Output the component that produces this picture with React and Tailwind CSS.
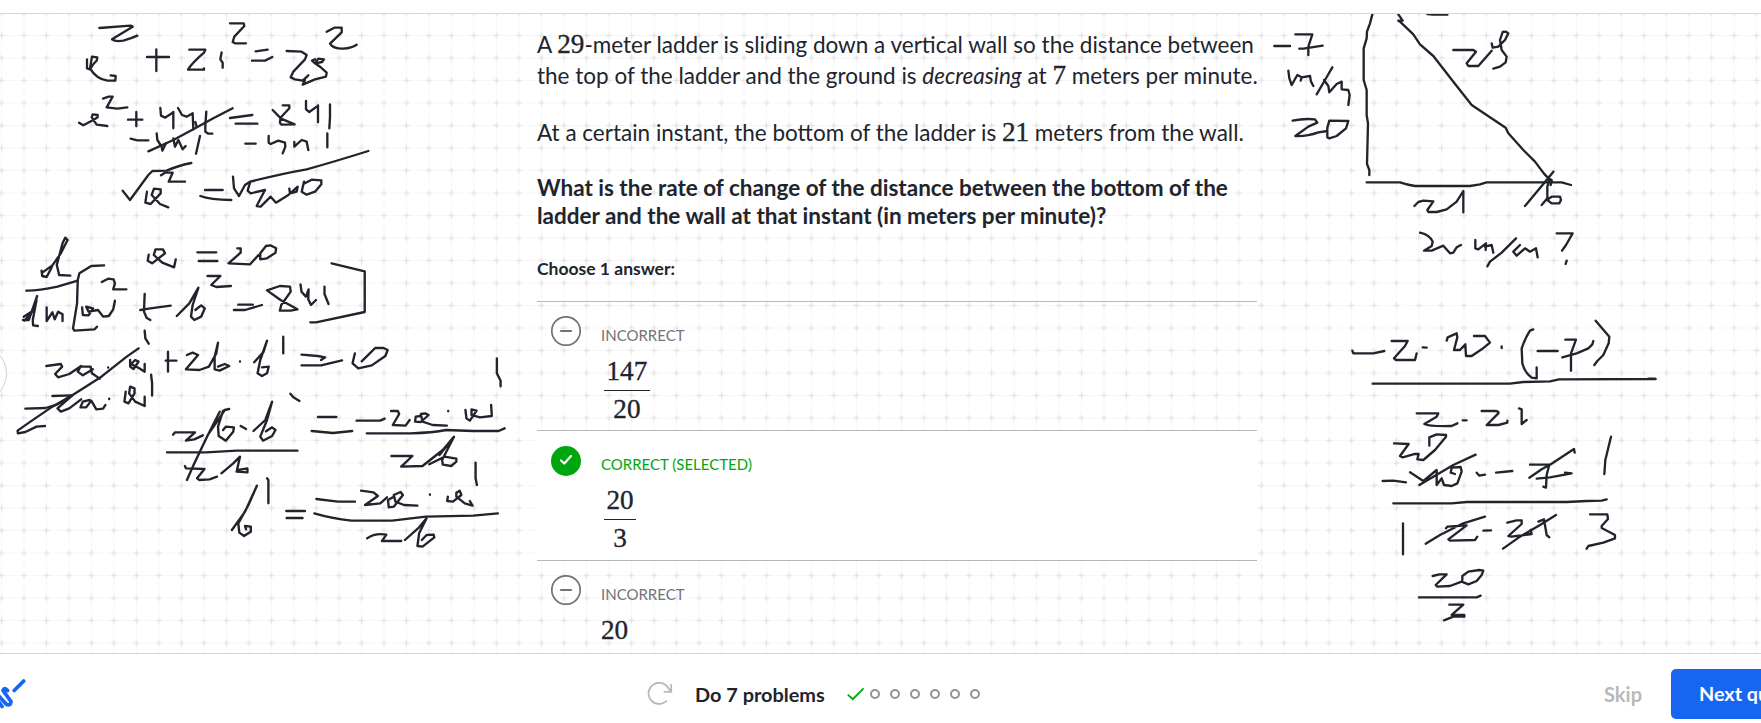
import React from "react";

const NOTES_TOP_LEFT = [
  "M298 84L392 77L398 80L336 118Q345 126 370 122Q395 115 412 107",
  "M261 178V205L270 208Q280 190 290 182L292 172L276 170L270 205Q288 236 322 242L346 242L347 228L332 226",
  "M441 171H507M469 148V213",
  "M568 149H616L612 158Q575 190 564 209H612V205",
  "M665 157L661 178L668 188V203",
  "M690 70H731L733 78L703 110L698 126L705 130H738",
  "M767 154L803 149M756 182H795L817 171",
  "M860 153L905 155L920 165L915 178L880 215L872 232L885 238L908 242L925 226M915 240L908 254L945 238L978 230L980 218L958 198M945 178L936 182L945 190L966 186L972 178L955 176L945 190L960 200",
  "M980 95L1003 83L1025 83V97L990 131Q1000 147 1030 146Q1055 144 1070 134",
  "M309 296L326 290H338L320 322L352 326L382 322",
  "M237 368L250 376L280 360L293 352V345L278 343L275 352L290 374L322 378",
  "M384 359H427M409 336V378",
  "M481 324L483 347L495 353L518 338M520 336V385M534 324L546 345L560 350L578 340L580 388M590 380L586 366M619 335L616 375V395L625 401H637",
  "M445 454L520 420L580 388L640 355L698 325",
  "M392 416L412 421H445",
  "M470 400L472 420L485 440L487 452L498 430M520 415L525 440L535 420L548 448L557 438M600 408L588 461",
  "M690 354L757 345M707 371H772",
  "M818 330L843 356L884 373L845 374Q836 370 843 352L868 325V316H848",
  "M918 303V328L928 336L950 320M954 316V367M990 313V350L988 385M736 431H767",
  "M806 408V428L812 432L835 422L855 428L856 440L848 460M883 426V440L905 420L920 425L925 450M982 400V442",
  "M368 572L390 600L445 525L457 513L500 512Q530 498 574 489",
  "M483 526L495 518H518L506 545H555",
  "M441 575L436 608L452 612L482 580V568L462 566L455 585L480 612L505 622",
  "M615 570H668M601 588Q630 599 694 600",
  "M699 530L702 565L717 588L735 555L750 545Q850 520 920 508Q1000 486 1105 453",
  "M750 548L743 572L752 580L795 570L770 618L782 620L812 590L828 608L865 585L893 560L890 575L870 580L868 566M912 545L905 575L920 584L945 575L964 553V541L935 539L910 552",
];

const NOTES_MIDDLE_LEFT = [
  "M123 152L125 168L138 171L150 148L155 136L125 158M155 136L180 100L200 60L193 53L185 70L168 135L175 165L208 167",
  "M78 212Q110 213 170 200L230 182",
  "M68 300H85L110 228M70 290L92 276M72 302L98 272M108 240L97 300L98 316L112 318M138 262V303L155 277L162 298L172 275L185 283V303",
  "M308 136L270 138L235 160L230 180L228 250L216 325L220 332L280 328L287 320",
  "M301 186L320 176L336 178L340 190L335 208H374",
  "M243 262L245 285L262 286L275 265L255 260L262 275L290 270L305 290L322 288L335 268L340 242",
  "M415 270L440 266L505 257M428 222L426 275L434 294L445 300",
  "M523 288L560 250L587 203L570 255L565 290L575 300L595 290L606 265L595 256L578 270M560 250L586 206",
  "M614 168L652 168L625 195L640 201L683 198",
  "M705 254H748M692 270H725L775 255",
  "M790 211L830 240L880 268L860 272L828 272L832 255L860 215L858 200L828 198L790 211",
  "M889 193L892 215L905 230L913 208L912 238L920 255L935 240M960 200V222L972 252",
  "M981 130L1079 154V276L935 307H918",
  "M440 104L437 122L450 130L488 100L482 88L460 88L455 105L480 128L515 142L520 118",
  "M584 97H640M588 123H643M702 85L712 85V98L676 130L740 133L765 105M787 78L770 100V118L790 115L815 98L817 85L800 76L787 78",
  "M428 332L430 355L440 371",
  "M137 438L180 432L184 440L163 462L172 472L205 462L240 438M265 440L238 440L230 455L245 466L275 448M268 440L272 460L295 476M320 442V443",
  "M410 385L375 410L300 470L215 525L155 560L90 605L52 632L53 640L75 636L108 620L133 618",
  "M385 420V440L395 447L410 425L400 420L388 432L412 445L428 455V432",
  "M490 422H522M497 395V455M553 405L570 398L586 405L550 448L590 450L618 440L640 400L645 368L635 410V448L650 452L678 438L665 432L645 440M710 424V425",
  "M752 427L780 395L790 362L770 420L762 460L775 468L790 460L795 440L775 442M838 350V400",
  "M892 404L940 408L962 412L950 420M892 436H950L1012 421",
  "M1050 400L1043 430L1060 445L1100 436L1140 408L1147 390L1135 384L1110 384L1070 424M1470 415V460L1481 482V499",
  "M155 528L213 526M75 566L135 564L170 553L213 528M210 530L170 565L180 575L205 565L240 538M265 540L245 545L238 562L255 562L270 542L285 568L305 566L312 555M323 536V537",
  "M372 515L368 545L380 550L398 520V505L385 500L382 520L400 545L428 558V530M447 464L450 490V527",
  "M859 521L868 532L886 543",
];

const NOTES_BOTTOM_LEFT = [
  "M512 104L518 97H577L550 122L575 118L600 106",
  "M553 240L575 190L615 105L650 35M618 100L640 68L665 30L678 27M660 32L645 80L647 108L668 122L690 95L692 82L668 80L660 90M712 78L728 87",
  "M750 93L785 60L805 5L790 60L770 110L778 122L805 108L815 90L805 82L787 94",
  "M941 51H995M922 93L985 99L1042 93M494 157H610L700 152H880",
  "M547 198L550 205L605 207L583 235L590 240L620 238L642 230M655 220L690 190L710 170L700 215L732 217V205L705 210",
  "M1055 62H1125L1138 56M1157 33H1177L1181 42L1162 75L1200 77L1212 60M1245 48L1230 50L1228 65L1245 66L1268 45L1258 40L1245 42L1250 65L1280 75L1322 77M1326 33V34",
  "M1377 30L1380 55L1390 62L1410 32L1395 28L1395 45L1420 52L1455 48L1453 15",
  "M1085 100H1215Q1280 98 1320 90L1400 93H1475L1493 85",
  "M1158 168H1220L1187 200L1250 198L1310 150L1343 110L1308 180L1310 194L1335 198L1350 185V176L1315 170L1270 193M1343 112L1300 165M1407 188V235L1411 255",
  "M686 390L725 335L760 257L735 315L705 370L708 398L722 408L742 395V380L725 378L728 388M790 235L794 240V310",
  "M847 333H902M848 354H895M936 297L1000 305H1050",
  "M1068 272L1105 277L1118 288L1080 315L1125 310L1145 292M1165 290L1148 300L1150 322L1165 320L1192 285L1185 276L1165 285L1170 305L1195 315L1235 317M1272 283V284M1325 290L1323 303L1340 305L1365 285L1360 272L1350 278V290L1375 310L1398 317L1390 303",
  "M930 340Q980 355 1040 362H1160L1260 350L1400 347L1473 340",
  "M1086 415Q1110 398 1143 404L1130 423H1187M1198 420L1240 382L1262 355L1240 400L1235 438L1250 440L1285 412L1283 404L1262 405L1248 420",
];

const NOTES_TRIANGLE = [
  "M397 43L390 70L381 95L380 115L371 145V240L380 270V345L384 370L381 492L388 510V525",
  "M475 43L488 62L475 62L480 65L520 103L540 133L580 168L640 245L695 315L797 383L805 400L850 450L885 485L912 521L935 545",
  "M562 42L580 44H622M103 138H150M166 103H217L205 140V165M178 146H190L248 137",
  "M640 150H700L708 155L680 190L685 198H715L755 152M755 130L758 143L775 140L795 120L805 100L798 95L788 96L780 120L785 150L800 170L797 187L780 200L760 206",
  "M145 212L148 235L155 255L172 225L185 232L182 242M185 232L210 228L213 245L220 258M277 202L255 240L230 283M252 240L265 258L268 277L290 252L305 245V268L325 270L329 285L325 315",
  "M158 362Q190 355 225 358L232 368L205 380L166 408Q200 410 235 397L262 393M262 383L268 362L325 363L318 385L290 408L268 415L262 412V383",
  "M380 547H480Q500 554 525 558H690L720 553L740 547H965L993 555",
  "M523 618L535 606L550 602L580 604L562 630L565 636H590L620 628L650 605L670 573V637",
  "M940 515L920 540L855 618M925 535L935 540L932 555M928 540L922 560V595L905 615M920 600L935 590H960L963 600L958 610H935L922 600",
  "M540 698Q570 705 578 725L575 738L552 752L575 752L610 737L630 760L640 758L650 742L663 735M706 720V745L715 748L738 730L737 750M735 740L755 735L760 758M828 715L785 758L750 785L742 799M840 735L820 755L830 767L855 745L870 755L888 745L893 772M950 700H998L978 735L966 752M980 782L977 792",
];

const NOTES_RIGHT = [
  "M97 152L100 160H160L193 153M215 123H263L255 138L222 175L228 180H285L290 160M308 142L320 143",
  "M380 122L383 112L410 100L412 112L402 150L420 150L436 133L438 168L455 168L485 148L510 128L495 108L462 108M545 139V144",
  "M640 88L630 92Q615 115 605 145L607 190Q615 220 635 233L650 235V202M653 153H713M736 119H768L753 160V212M727 172L770 160L805 145L817 133L820 123M827 62L868 110L866 130L850 165L832 183L823 195",
  "M158 251H570L610 246L690 244L717 238L1007 237M985 236H1005",
  "M290 340H355L350 350L313 372Q330 380 395 378L412 370M428 361H440M485 333H525Q538 333 535 340L500 375L535 375L562 368V362M597 325L605 328V372L620 360",
  "M222 430L266 432L240 468L248 472L285 462L296 462L292 478L310 480L345 450L378 410V405L350 403L328 412V437",
  "M188 543L220 542L258 547M298 555L340 530L400 495L467 464M270 517L310 543L350 510V555L365 535L372 555L395 558L412 550L425 515L422 501L395 503L392 518L405 522M470 518L478 527L495 524M528 518L577 513",
  "M630 494H688L680 525L678 563L670 560M650 536L690 532L755 520L735 518M628 533L665 508L690 494L762 447L764 458M873 410L856 480L853 522",
  "M220 610H395L440 606H740L800 603L845 602L860 598",
  "M249 670V763M317 731L360 705L430 670L495 650M378 685L382 680L440 676L385 718L390 722L465 720L472 710M490 692L513 691M562 668L590 661H605V672L565 708L575 710L635 702L632 690M549 746L600 710L660 675L708 645M655 665L672 658L680 705L688 712M810 643H862L864 657L845 678V684L885 705V715L850 728L805 738L800 746",
  "M338 828L358 823H380L347 855L352 860L390 858L425 845L445 853L470 843L485 825L490 812L478 810L445 815L427 828V840",
  "M297 892H470L482 887M388 914H430L395 945H433V950H400L372 961",
];

function Ink({ origin, strokes, scale }) {
  return (
    <g transform={`translate(${origin[0]} ${origin[1]}) scale(${scale})`}>
      {strokes.map((d, i) => (
        <path key={i} d={d} />
      ))}
    </g>
  );
}

function Scratchpad() {
  return (
    <svg
      className="pointer-events-none absolute inset-0"
      width="1761"
      height="640"
      viewBox="0 14 1761 640"
    >
      <g
        fill="none"
        stroke="#21242c"
        strokeWidth="7"
        strokeLinecap="round"
        strokeLinejoin="round"
      >
        <Ink origin={[0, 0]} scale="0.33333" strokes={NOTES_TOP_LEFT} />
        <Ink origin={[0, 220]} scale="0.33801 0.33333" strokes={NOTES_MIDDLE_LEFT} />
        <Ink origin={[0, 400]} scale="0.33801 0.33333" strokes={NOTES_BOTTOM_LEFT} />
        <Ink origin={[1240, 0]} scale="0.33333" strokes={NOTES_TRIANGLE} />
        <Ink origin={[1320, 300]} scale="0.33333" strokes={NOTES_RIGHT} />
      </g>
    </svg>
  );
}

function GridPaper() {
  return (
    <svg
      className="absolute inset-0"
      width="1761"
      height="640"
      viewBox="0 14 1761 640"
    >
      <defs>
        <pattern
          id="grid"
          x="-9.75"
          y="1.75"
          width="22.5"
          height="22.5"
          patternUnits="userSpaceOnUse"
        >
          <path
            d="M0 11.25H22.5M11.25 0V22.5"
            stroke="#f3f3f4"
            strokeWidth="1"
            strokeDasharray="1.4 0.9"
          />
          <path
            d="M8.2 11.25H14.3M11.25 8.2V14.3"
            stroke="#e6e6e7"
            strokeWidth="1.5"
          />
        </pattern>
      </defs>
      <rect x="0" y="14" width="1761" height="640" fill="url(#grid)" />
      <circle cx="-21.5" cy="373.5" r="28" fill="#fff" stroke="#cfcfd1" />
    </svg>
  );
}

function Num({ children }) {
  return (
    <span className="font-['Liberation_Serif',serif] text-[27.2px] leading-none [-webkit-text-stroke:0.35px_#21242c]">
      {children}
    </span>
  );
}

function Fraction({ top, bottom }) {
  return (
    <div className="ml-[3px] inline-flex flex-col items-center font-['Liberation_Serif',serif] text-[27.2px] leading-[27px] [-webkit-text-stroke:0.35px_#21242c]">
      <span className="px-[2.5px]">{top}</span>
      <span className="mt-[5px] h-px w-full bg-[#21242c]" />
      <span className="mt-[5px]">{bottom}</span>
    </div>
  );
}

function StatusIcon({ correct }) {
  return correct ? (
    <svg width="30" height="30" viewBox="0 0 30 30" fill="none">
      <circle cx="15" cy="15" r="15" fill="#00a60e" />
      <path
        d="M10 14.5L13.3 17.5L20 10"
        stroke="#fff"
        strokeWidth="2.2"
        strokeLinecap="round"
        strokeLinejoin="round"
      />
    </svg>
  ) : (
    <svg width="30" height="30" viewBox="0 0 30 30" fill="none">
      <circle cx="15" cy="15" r="14.2" stroke="#717378" strokeWidth="1.7" />
      <path
        d="M10 15H20"
        stroke="#717378"
        strokeWidth="2.2"
        strokeLinecap="round"
      />
    </svg>
  );
}

function Choice({ correct, label, children }) {
  return (
    <li
      className={
        correct
          ? "flex h-[130px] border-t border-[#b8b9bb] bg-white pl-[14px]"
          : "flex h-[129px] border-t border-[#b8b9bb] pl-[14px]"
      }
    >
      <div className={correct ? "mt-[15px] w-[50px]" : "mt-[14px] w-[50px]"}>
        <StatusIcon correct={correct} />
      </div>
      <div className="pt-[23px]">
        <div
          className={
            correct
              ? "text-[15px] leading-5 text-[#00a60e]"
              : "text-[15px] leading-5 text-[#717378]"
          }
        >
          {label}
        </div>
        <div className="mt-[13px] flex">{children}</div>
      </div>
    </li>
  );
}

export default function App() {
  return (
    <div className="flex h-[723px] w-full flex-col overflow-hidden bg-white font-[Lato,sans-serif] text-[#21242c]">
      <header className="h-[14px] shrink-0 border-b border-[#d6d7d8]" />

      <main className="relative h-[639px] shrink-0 overflow-hidden">
        <GridPaper />
        <div className="relative ml-[537px] w-[720px] pt-[15px]">
          <p className="text-[22.5px] leading-[31px] whitespace-nowrap">
            A <Num>29</Num>-meter ladder is sliding down a vertical wall so the
            distance between
            <br />
            the top of the ladder and the ground is <em>decreasing</em> at{" "}
            <Num>7</Num> meters per minute.
          </p>
          <p className="mt-[26px] text-[22.5px] leading-[31px] whitespace-nowrap">
            At a certain instant, the bottom of the ladder is <Num>21</Num>{" "}
            meters from the wall.
          </p>
          <p className="mt-[25.5px] text-[22.5px] leading-[28.3px] font-bold whitespace-nowrap">
            What is the rate of change of the distance between the bottom of the
            <br />
            ladder and the wall at that instant (in meters per minute)?
          </p>
          <div className="mt-[26px] h-[45px] text-[17.5px] leading-[25px] font-bold">
            Choose 1 answer:
          </div>
          <ul>
            <Choice label="INCORRECT">
              <Fraction top="147" bottom="20" />
            </Choice>
            <Choice correct label="CORRECT (SELECTED)">
              <Fraction top="20" bottom="3" />
            </Choice>
            <Choice label="INCORRECT">
              <Num>20</Num>
            </Choice>
          </ul>
        </div>
        <Scratchpad />
      </main>

      <footer className="flex h-[70px] shrink-0 items-center border-t border-[#d6d7d8] bg-white pt-[11px]">
        <svg width="30" height="40" viewBox="0 0 30 40" fill="none" className="mb-[2px] shrink-0">
          <g
            stroke="#1865f2"
            strokeWidth="3.8"
            strokeLinecap="round"
            strokeLinejoin="round"
          >
            <path d="M-3 26.5L2 33.5M-2 22L6 31Q10.5 33.5 11 28.5L3 17.5Q4.5 13.8 7.5 17.5" />
            <path d="M14.2 17.5L23.7 8" />
          </g>
        </svg>
        <svg width="26" height="24" viewBox="0 0 26 24" fill="none" className="ml-[617px] shrink-0">
          <path
            d="M19.3 19.2A10.6 10.6 0 1 1 21 5.6L23.6 9.4M24.2 2.6V9.8H17.4"
            stroke="#b8b9bb"
            strokeWidth="1.8"
            strokeLinecap="round"
          />
        </svg>
        <div className="ml-[22px] w-[152px] shrink-0 text-[19.9px] leading-6 font-bold whitespace-nowrap">
          Do 7 problems
        </div>
        <div className="flex shrink-0 items-center">
          <svg width="18" height="14" viewBox="0 0 18 14" fill="none">
            <path d="M0.8 7.6L5.8 12.2L16.5 1.4" stroke="#00a60e" strokeWidth="1.8" />
          </svg>
          <div className="ml-[5px] flex gap-[10px]">
            {[1, 2, 3, 4, 5, 6].map((n) => (
              <span
                key={n}
                className="size-[10px] rounded-full border-2 border-[#909195]"
              />
            ))}
          </div>
        </div>
        <div className="ml-auto flex shrink-0 items-center">
          <span className="text-[20px] leading-6 font-bold text-[#b8b9bb]">
            Skip
          </span>
          <div className="ml-[29px] flex h-[50px] w-[90px] items-center overflow-hidden rounded-l-[5px] bg-[#1865f2] pl-[28px] text-[19.8px] font-bold whitespace-nowrap text-white">
            Next question
          </div>
        </div>
      </footer>
    </div>
  );
}
